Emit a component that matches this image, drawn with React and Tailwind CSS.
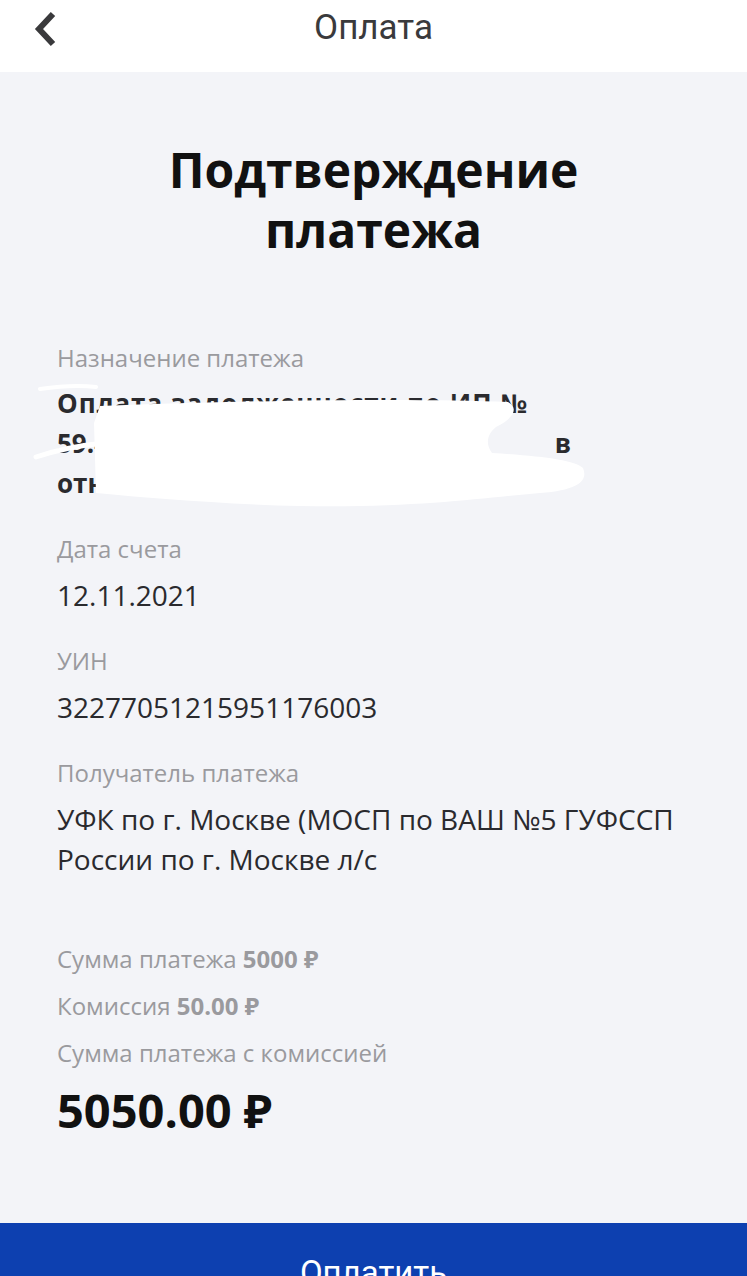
import React from 'react';

const font = { fontFamily: '"Open Sans", "Noto Sans", sans-serif' };

const Field = ({ label, children }) => (
    <div className="mt-[31px]">
        <div className="text-[24px] leading-[30px] text-[#9a9a9e]">{label}</div>
        <div className="mt-[11px] text-[28px] leading-[40px] text-[#2a2a2e]">{children}</div>
    </div>
);

export default function App() {
    return (
        <div className="w-[747px] h-[1276px] overflow-hidden bg-[#f3f4f8] flex flex-col" style={font}>
            {/* Header */}
            <div className="h-[72px] bg-white relative flex items-center justify-center shrink-0">
                <button className="absolute left-[30px] top-[11px] w-[30px] h-[36px] flex items-center justify-center">
                    <svg width="26" height="36" viewBox="0 0 26 36">
                        <path d="M21 3 L7 18 L21 33" fill="none" stroke="#3a3a3c" strokeWidth="6" strokeLinejoin="miter" />
                    </svg>
                </button>
                <h1 className="text-[35px] text-[#3a3a3c] -mt-[16px]" style={{ fontFamily: 'Roboto, sans-serif' }}>Оплата</h1>
            </div>

            {/* Body */}
            <div className="flex-1 flex flex-col px-[57px]">
                <h2 className="mt-[68px] text-center text-[48px] leading-[60px] font-bold text-[#111]">
                    Подтверждение<br />платежа
                </h2>

                <div className="mt-[83px]">
                    <div>
                        <div className="text-[24px] leading-[30px] text-[#9a9a9e]">Назначение платежа</div>
                        <div className="relative mt-[10px] text-[26px] leading-[40px] font-bold text-[#2a2a2e]">
                            <div className="tracking-[1px]">Оплата задолженности по ИП №</div>
                            <div className="w-[514px] flex justify-between"><span>59.4</span><span>в</span></div>
                            <div>отн</div>
                            {/* redaction scribble */}
                            <svg className="absolute -left-[57px] top-0" width="620" height="130" viewBox="0 0 620 130">
                                <path d="M100 23 C250 17 420 15 508 19 C520 26 512 36 496 44 C486 52 486 62 492 70 C540 73 575 77 583 85 C588 97 580 107 540 110 C480 115 420 125 300 123 C220 121 150 115 96 110 L94 40 Z" fill="#fff" />
                                <path d="M36 74 C60 66 84 62 104 60" fill="none" stroke="#fff" strokeWidth="5" strokeLinecap="round" />
                                <path d="M40 6 C60 3 80 2 96 4" fill="none" stroke="#fff" strokeWidth="4" strokeLinecap="round" />
                            </svg>
                        </div>
                    </div>

                    <Field label="Дата счета">12.11.2021</Field>
                    <Field label="УИН">32277051215951176003</Field>
                    <Field label="Получатель платежа">
                        УФК по г. Москве (МОСП по ВАШ №5 ГУФССП<br />России по г. Москве л/с
                    </Field>
                </div>

                {/* Summary */}
                <div className="mt-[65px] flex flex-col gap-[17px] text-[24px] leading-[30px] text-[#9a9a9e]">
                    <div>Сумма платежа <span className="font-bold">5000 ₽</span></div>
                    <div>Комиссия <span className="font-bold">50.00 ₽</span></div>
                    <div>Сумма платежа с комиссией</div>
                </div>
                <div className="mt-[14px] text-[47px] leading-[56px] font-bold text-[#111]">5050.00 ₽</div>
            </div>

            {/* Pay button */}
            <button className="h-[53px] shrink-0 bg-[#0d40b0] text-white text-[33px] flex justify-center pt-[30px]" style={{ fontFamily: 'Roboto, sans-serif' }}>
                <span className="leading-[40px]">Оплатить</span>
            </button>
        </div>
    );
}
